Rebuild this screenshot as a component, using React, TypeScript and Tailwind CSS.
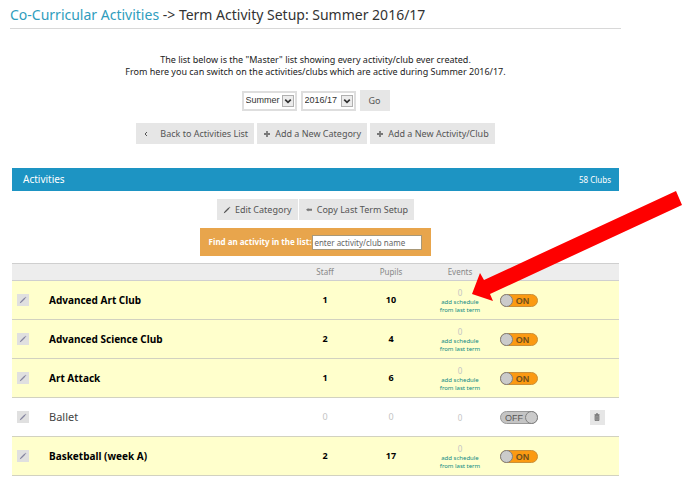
import { useState } from 'react';
import type { ReactNode } from 'react';
import clsx from 'clsx';

type Club = {
  id: number;
  name: string;
  staff: number;
  pupils: number;
  events: number;
  active: boolean;
};

const initialClubs: Club[] = [
  { id: 1, name: 'Advanced Art Club', staff: 1, pupils: 10, events: 0, active: true },
  { id: 2, name: 'Advanced Science Club', staff: 2, pupils: 4, events: 0, active: true },
  { id: 3, name: 'Art Attack', staff: 1, pupils: 6, events: 0, active: true },
  { id: 4, name: 'Ballet', staff: 0, pupils: 0, events: 0, active: false },
  { id: 5, name: 'Basketball (week A)', staff: 2, pupils: 17, events: 0, active: true },
];

const terms = ['Summer', 'Autumn', 'Spring'];
const years = ['2016/17', '2015/16'];

function PencilIcon() {
  return (
    <svg viewBox="0 0 8 8" className="h-2 w-2 shrink-0" aria-hidden="true">
      <path d="M2 6 L6 2" stroke="currentColor" strokeWidth="1.2" fill="none" />
      <path d="M0.8 7.2 L1.3 5.6 L2.4 6.7 Z M6 1.2 L6.6 0.7 L7.4 1.5 L6.8 2.1 Z" fill="currentColor" />
    </svg>
  );
}

function PlusIcon() {
  return (
    <svg viewBox="0 0 8 8" className="h-2 w-2 shrink-0 text-[#777]" aria-hidden="true">
      <path d="M4 1 V7 M1 4 H7" stroke="currentColor" strokeWidth="1.8" fill="none" />
    </svg>
  );
}

function BackIcon() {
  return (
    <svg viewBox="0 0 8 8" className="h-2 w-2 shrink-0" aria-hidden="true">
      <path d="M5 2 L3 4 L5 6" stroke="currentColor" strokeWidth="1" fill="none" />
    </svg>
  );
}

function CopyIcon() {
  return (
    <svg viewBox="0 0 8 8" className="h-2 w-2 shrink-0 text-[#777]" aria-hidden="true">
      <path d="M1 3.8 L3.4 2 V2.8 H7 V4.8 H3.4 V5.6 Z" fill="currentColor" />
    </svg>
  );
}

function TrashIcon() {
  return (
    <svg viewBox="0 0 8 8" className="h-2 w-2 shrink-0" aria-hidden="true">
      <path d="M1.5 1.8 H6.5 M3 0.9 H5" stroke="currentColor" strokeWidth="1" fill="none" />
      <path d="M2 2.6 H6 V7.5 H2 Z" fill="#aaaaaa" stroke="currentColor" strokeWidth="0.7" />
      <path d="M3.3 3.4 V6.8 M4.7 3.4 V6.8" stroke="currentColor" strokeWidth="0.6" />
    </svg>
  );
}

function GreyButton({ icon, children, className }: { icon?: ReactNode; children: ReactNode; className?: string }) {
  return (
    <button
      type="button"
      className={clsx('flex h-[21px] items-center bg-[#e6e6e6] text-[9px] text-[#555] hover:bg-[#dcdcdc]', className)}
    >
      {icon}
      {children}
    </button>
  );
}

function DropDown({ label, options }: { label: string; options: string[] }) {
  return (
    <span className="relative flex">
      <select
        aria-label={label}
        className="h-[20px] w-[55px] appearance-none border-2 border-[#dedede] bg-white pl-[2px] font-['Liberation_Sans',sans-serif] text-[9px] text-[#333]"
      >
        {options.map((o) => (
          <option key={o}>{o}</option>
        ))}
      </select>
      <svg viewBox="0 0 12 12" className="pointer-events-none absolute top-1 right-[3px] h-3 w-3" aria-hidden="true">
        <rect x="0.5" y="0.5" width="11" height="11" fill="#ececec" stroke="#b0b0b0" />
        <path d="M3.2 4.6 L6 7.4 L8.8 4.6" stroke="#333" strokeWidth="1.7" fill="none" />
      </svg>
    </span>
  );
}

function Toggle({ on, label, onClick }: { on: boolean; label: string; onClick: () => void }) {
  return (
    <button
      type="button"
      role="switch"
      aria-checked={on}
      aria-label={label}
      onClick={onClick}
      className={clsx(
        'flex h-[13px] w-[38px] items-center rounded-full border font-["Liberation_Sans",sans-serif] text-[9px]',
        on ? 'border-[#c9913a] bg-[#fb9a12] text-[#70501c]' : 'flex-row-reverse border-[#999] bg-[#c4c4c4] text-[#555]'
      )}
    >
      <span className="-mx-px h-[13px] w-[13px] shrink-0 rounded-full border border-[#808080] bg-[#cbcbcb]" />
      <span className={clsx('flex-1 pt-px text-center leading-3', on ? 'pr-1' : 'pl-px')}>{on ? 'ON' : 'OFF'}</span>
    </button>
  );
}

export default function App() {
  const [clubs, setClubs] = useState(initialClubs);
  const [search, setSearch] = useState('');

  const toggleClub = (id: number) => {
    setClubs((prev) => prev.map((c) => (c.id === id ? { ...c, active: !c.active } : c)));
  };

  const visible = clubs.filter((c) => c.name.toLowerCase().includes(search.toLowerCase()));

  return (
    <div className="relative bg-white pr-[79px] pl-[10px] font-['Noto_Sans','Open_Sans',sans-serif] text-[#333]">
      <h1 className="border-b border-[#d8d8d8] pt-[5px] pb-[3px] text-[14px] leading-5">
        <a href="#activities" className="text-[#2f9dbd]">Co-Curricular Activities</a>
        {' -> Term Activity Setup: Summer 2016/17'}
      </h1>

      <div className="pr-[2px] pl-[2px]">
        <p className="mt-[25px] text-center text-[9px] leading-3 text-[#222]">
          The list below is the "Master" list showing every activity/club ever created.
          <br />
          From here you can switch on the activities/clubs which are active during Summer 2016/17.
        </p>

        <form className="mt-3 flex items-center justify-center gap-1" onSubmit={(e) => e.preventDefault()}>
          <DropDown label="Term" options={terms} />
          <DropDown label="Year" options={years} />
          <GreyButton className="px-[9px]">Go</GreyButton>
        </form>

        <div className="mt-3 flex justify-center gap-[3px]">
          <GreyButton icon={<BackIcon />} className="gap-[10px] px-[6px]">Back to Activities List</GreyButton>
          <GreyButton icon={<PlusIcon />} className="gap-1 px-[6px]">Add a New Category</GreyButton>
          <GreyButton icon={<PlusIcon />} className="gap-1 px-[6px]">Add a New Activity/Club</GreyButton>
        </div>

        {/* Activities panel */}
        <section id="activities" className="mt-6">
          <header className="flex h-[23px] items-center justify-between bg-[#1d94c3] pr-2 pl-[11px] text-white">
            <h2 className="text-[10px]">Activities</h2>
            <span className="text-[8px]">58 Clubs</span>
          </header>

          <div className="mt-2 flex justify-center gap-px">
            <GreyButton icon={<PencilIcon />} className="gap-1 px-[6px]">Edit Category</GreyButton>
            <GreyButton icon={<CopyIcon />} className="gap-1 px-[6px]">Copy Last Term Setup</GreyButton>
          </div>

          <div className="mt-2 flex justify-center">
            <div className="flex h-7 items-center gap-px bg-[#e8a54c] px-[9px]">
              <label htmlFor="find" className="text-[8px] font-bold text-white">Find an activity in the list:</label>
              <input
                id="find"
                type="text"
                placeholder="enter activity/club name"
                value={search}
                onChange={(e) => setSearch(e.target.value)}
                className="h-[15px] w-[110px] border border-[#a89878] bg-white px-px text-[8px] placeholder:text-[#666]"
              />
            </div>
          </div>

          <table className="mt-[7px] w-full table-fixed border-collapse text-center text-[9px]">
            <colgroup>
              <col className="w-[37px]" />
              <col />
              <col className="w-[66px]" />
              <col className="w-[66px]" />
              <col className="w-[72px]" />
              <col className="w-[79px]" />
              <col className="w-[44px]" />
            </colgroup>
            <thead>
              <tr className="h-[17px] border-y border-[#cfcfcf] bg-[#ededed] text-[8px] text-[#888]">
                <td />
                <td />
                <th scope="col" className="font-normal">Staff</th>
                <th scope="col" className="font-normal">Pupils</th>
                <th scope="col" className="font-normal">Events</th>
                <td />
                <td />
              </tr>
            </thead>
            <tbody>
              {visible.map((club) => (
                <tr
                  key={club.id}
                  className={clsx(
                    'h-[39px] border-b border-[#d2d2c0]',
                    club.active ? 'bg-[#ffffcc] font-bold text-black' : 'bg-white text-[#c4c4c4]'
                  )}
                >
                  <td className="pl-[5px]">
                    <button
                      type="button"
                      aria-label={`Edit ${club.name}`}
                      className="flex h-3 w-3 items-center justify-center bg-[#e0e0e0] text-[#8585a0]"
                    >
                      <PencilIcon />
                    </button>
                  </td>
                  <td className={clsx('text-left', club.active ? 'text-[10px]' : 'text-[11px] text-[#444]')}>{club.name}</td>
                  <td>{club.staff}</td>
                  <td>{club.pupils}</td>
                  <td className="font-normal text-[#c4c4c4]">
                    <span className="block text-[8px] leading-[11px]">{club.events}</span>
                    {club.active && (
                      <a href="#schedule" className="block text-[6px] leading-2 text-[#108a84]">
                        add schedule
                        <br />
                        from last term
                      </a>
                    )}
                  </td>
                  <td className="pl-1">
                    <Toggle on={club.active} label={club.name} onClick={() => toggleClub(club.id)} />
                  </td>
                  <td>
                    {!club.active && (
                      <button
                        type="button"
                        aria-label={`Delete ${club.name}`}
                        className="mx-auto flex h-[15px] w-[15px] items-center justify-center bg-[#e6e6e6] text-[#666]"
                      >
                        <TrashIcon />
                      </button>
                    )}
                  </td>
                </tr>
              ))}
            </tbody>
          </table>
        </section>
      </div>

      {/* Arrow pointing at the schedule link */}
      <svg
        viewBox="0 0 212 112"
        className="pointer-events-none absolute top-[190px] left-[471px] h-[112px] w-[212px]"
        aria-hidden="true"
      >
        <path d="M1 104 L9 83 L13 90 L205 1 L211 15 L19 104 L22 111 Z" fill="#fe0000" />
      </svg>
    </div>
  );
}
